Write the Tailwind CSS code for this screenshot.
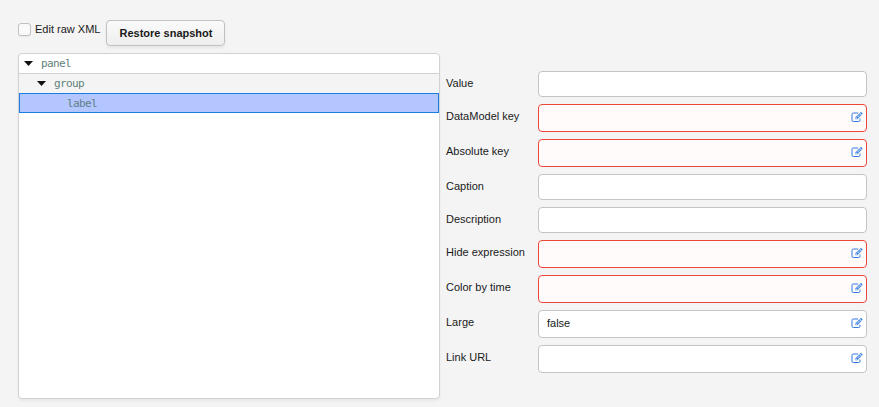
<!DOCTYPE html>
<html lang="en">
<head>
<meta charset="utf-8">
<title>Panel editor</title>
<script src="https://cdn.jsdelivr.net/npm/@tailwindcss/browser@4"></script>
</head>
<body class="h-[407px] overflow-hidden bg-[#f4f4f4] font-['Liberation_Sans',Arial,sans-serif] text-[11px] text-[#1a1a1a]">
<svg class="hidden">
  <symbol id="edit" viewBox="0 0 12 10" overflow="visible">
    <path d="M7.2 1H2.3Q1 1 1 2.3V8.2Q1 9.5 2.3 9.5H7.7Q9 9.5 9 8.2V6.6" fill="none" stroke="currentColor" stroke-width="1"/>
    <path d="M4.4 7.3V5.3L8.4 1.3L10.4 3.3L6.4 7.3Z" fill="currentColor" fill-opacity=".85"/>
    <path d="M8.9 .8L9.5 .2Q9.9-.1 10.3 .2L11.4 1.3Q11.8 1.7 11.4 2.1L10.8 2.8Z" fill="currentColor"/>
    <path d="M5.1 5.7V6.6H6M6.4 5.1L8.7 2.8" fill="none" stroke="white" stroke-width=".7"/>
  </symbol>
</svg>
<div class="flex h-[53px] pl-[18px]">
  <label class="mt-[22px] flex h-[14px] items-center">
    <span class="h-[13px] w-[13px] rounded-[3px] border border-[#c1c1c1] bg-[#fafafa] shadow-[0_1px_1px_rgba(0,0,0,0.06)]"></span>
    <span class="ml-[4px] w-[71px] whitespace-nowrap">Edit raw XML</span>
  </label>
  <button class="mt-[20px] h-[26px] w-[119px] whitespace-nowrap rounded-[4px] border border-[#c1c1c1] bg-linear-to-b from-[#fafafa] to-[#eeeeee] pl-[1px] text-[11px] font-bold shadow-[0_2px_3px_rgba(0,0,0,0.06)]">Restore snapshot</button>
</div>
<main class="flex pl-[18px]">
  <section class="h-[346px] w-[422px] overflow-hidden rounded-[4px] border border-[#d2d2d2] bg-white font-['DejaVu_Sans_Mono',monospace] text-[11px] leading-[19px] text-[#5f827c] shadow-[0_2px_3px_rgba(0,0,0,0.05)]">
    <div class="flex h-[20px] items-center border-b border-[#d2d2d2] pl-[5px]">
      <svg class="mr-[8px] h-[5px] w-[9px]" viewBox="0 0 9 5"><path d="M0 0H9L4.5 5Z" fill="#111"/></svg><span class="tracking-[-0.6px]">panel</span>
    </div>
    <div class="flex h-[19px] items-center bg-[#f4f4f4] pl-[18px]">
      <svg class="mr-[8px] h-[5px] w-[9px]" viewBox="0 0 9 5"><path d="M0 0H9L4.5 5Z" fill="#111"/></svg><span class="tracking-[-0.6px]">group</span>
    </div>
    <div class="flex h-[20px] items-center border border-[#197de1] bg-[#b3c6ff] pl-[47px] text-[#5f7f88]"><span class="tracking-[-0.6px]">label</span></div>
  </section>
  <section class="ml-[6px] mt-[18px] grid grid-cols-[92px_329px] auto-rows-min gap-y-[7px]">
    <div class="h-[26px] leading-[25px]">Value</div>
    <div class="h-[26px] rounded-[4px] border border-[#c5c5c5] bg-white"></div>
    <div class="h-[26px] leading-[25px]">DataModel key</div>
    <div class="flex h-[28px] items-center justify-end rounded-[4px] border border-[#ed473b] bg-[#fffbfa] pr-[3px] pb-[2px] text-[#3079de]"><svg class="h-[10px] w-[12px] overflow-visible"><use href="#edit"/></svg></div>
    <div class="h-[26px] leading-[25px]">Absolute key</div>
    <div class="flex h-[28px] items-center justify-end rounded-[4px] border border-[#ed473b] bg-[#fffbfa] pr-[3px] pb-[2px] text-[#3079de]"><svg class="h-[10px] w-[12px] overflow-visible"><use href="#edit"/></svg></div>
    <div class="h-[26px] leading-[25px]">Caption</div>
    <div class="h-[26px] rounded-[4px] border border-[#c5c5c5] bg-white"></div>
    <div class="h-[26px] leading-[25px]">Description</div>
    <div class="h-[26px] rounded-[4px] border border-[#c5c5c5] bg-white"></div>
    <div class="h-[26px] leading-[25px]">Hide expression</div>
    <div class="flex h-[28px] items-center justify-end rounded-[4px] border border-[#ed473b] bg-[#fffbfa] pr-[3px] pb-[2px] text-[#3079de]"><svg class="h-[10px] w-[12px] overflow-visible"><use href="#edit"/></svg></div>
    <div class="h-[26px] leading-[25px]">Color by time</div>
    <div class="flex h-[28px] items-center justify-end rounded-[4px] border border-[#ed473b] bg-[#fffbfa] pr-[3px] pb-[2px] text-[#3079de]"><svg class="h-[10px] w-[12px] overflow-visible"><use href="#edit"/></svg></div>
    <div class="h-[26px] leading-[25px]">Large</div>
    <div class="flex h-[28px] items-center justify-between rounded-[4px] border border-[#c5c5c5] bg-white pl-[8px] pr-[3px] pb-[2px] text-[#3079de]"><span class="text-[#1a1a1a]">false</span><svg class="h-[10px] w-[12px] overflow-visible"><use href="#edit"/></svg></div>
    <div class="h-[26px] leading-[25px]">Link URL</div>
    <div class="flex h-[28px] items-center justify-end rounded-[4px] border border-[#c5c5c5] bg-white pr-[3px] pb-[2px] text-[#3079de]"><svg class="h-[10px] w-[12px] overflow-visible"><use href="#edit"/></svg></div>
  </section>
</main>
</body>
</html>
